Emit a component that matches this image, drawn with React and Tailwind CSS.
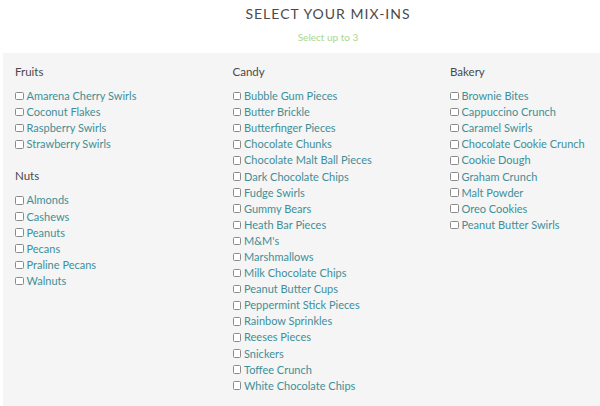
import React from "react";

const columns = [
  [
    { title: "Fruits", items: ["Amarena Cherry Swirls", "Coconut Flakes", "Raspberry Swirls", "Strawberry Swirls"] },
    { title: "Nuts", items: ["Almonds", "Cashews", "Peanuts", "Pecans", "Praline Pecans", "Walnuts"] },
  ],
  [
    {
      title: "Candy",
      items: [
        "Bubble Gum Pieces",
        "Butter Brickle",
        "Butterfinger Pieces",
        "Chocolate Chunks",
        "Chocolate Malt Ball Pieces",
        "Dark Chocolate Chips",
        "Fudge Swirls",
        "Gummy Bears",
        "Heath Bar Pieces",
        "M&M's",
        "Marshmallows",
        "Milk Chocolate Chips",
        "Peanut Butter Cups",
        "Peppermint Stick Pieces",
        "Rainbow Sprinkles",
        "Reeses Pieces",
        "Snickers",
        "Toffee Crunch",
        "White Chocolate Chips",
      ],
    },
  ],
  [
    {
      title: "Bakery",
      items: [
        "Brownie Bites",
        "Cappuccino Crunch",
        "Caramel Swirls",
        "Chocolate Cookie Crunch",
        "Cookie Dough",
        "Graham Crunch",
        "Malt Powder",
        "Oreo Cookies",
        "Peanut Butter Swirls",
      ],
    },
  ],
];

function Item({ label }) {
  return (
    <label className="flex h-[16.1px] items-center">
      <span className="mr-[3px] inline-block h-[8.5px] w-[8.5px] shrink-0 rounded-[1.5px] border border-[#8a8a8a] bg-white" />
      <span className="text-[11px] leading-4 text-[#3f8f98]">{label}</span>
    </label>
  );
}

export default function App() {
  return (
    <div className="h-[406px] w-[600px] overflow-hidden bg-white" style={{ fontFamily: "Lato, 'Open Sans', sans-serif" }}>
      <div className="ml-[3px] w-[650px]">
        <div className="pt-[4px] text-center text-[14px] leading-5 tracking-[1px] text-[#4a4a4a]">SELECT YOUR MIX-INS</div>
        <div className="mt-[6px] text-center text-[10px] leading-[14px] text-[#a9d88c]">Select up to 3</div>
        <div className="mt-[9px] flex bg-[#f5f5f5] px-3 pb-5 pt-[11px]">
          {columns.map((col, ci) => (
            <div key={ci} className="flex w-[217.5px] shrink-0 flex-col gap-4">
              {col.map((g) => (
                <div key={g.title}>
                  <div className="text-[11.5px] leading-4 text-[#4a4a4a]">{g.title}</div>
                  <div className="mt-2 flex flex-col">
                    {g.items.map((it) => (
                      <Item key={it} label={it} />
                    ))}
                  </div>
                </div>
              ))}
            </div>
          ))}
        </div>
      </div>
    </div>
  );
}
